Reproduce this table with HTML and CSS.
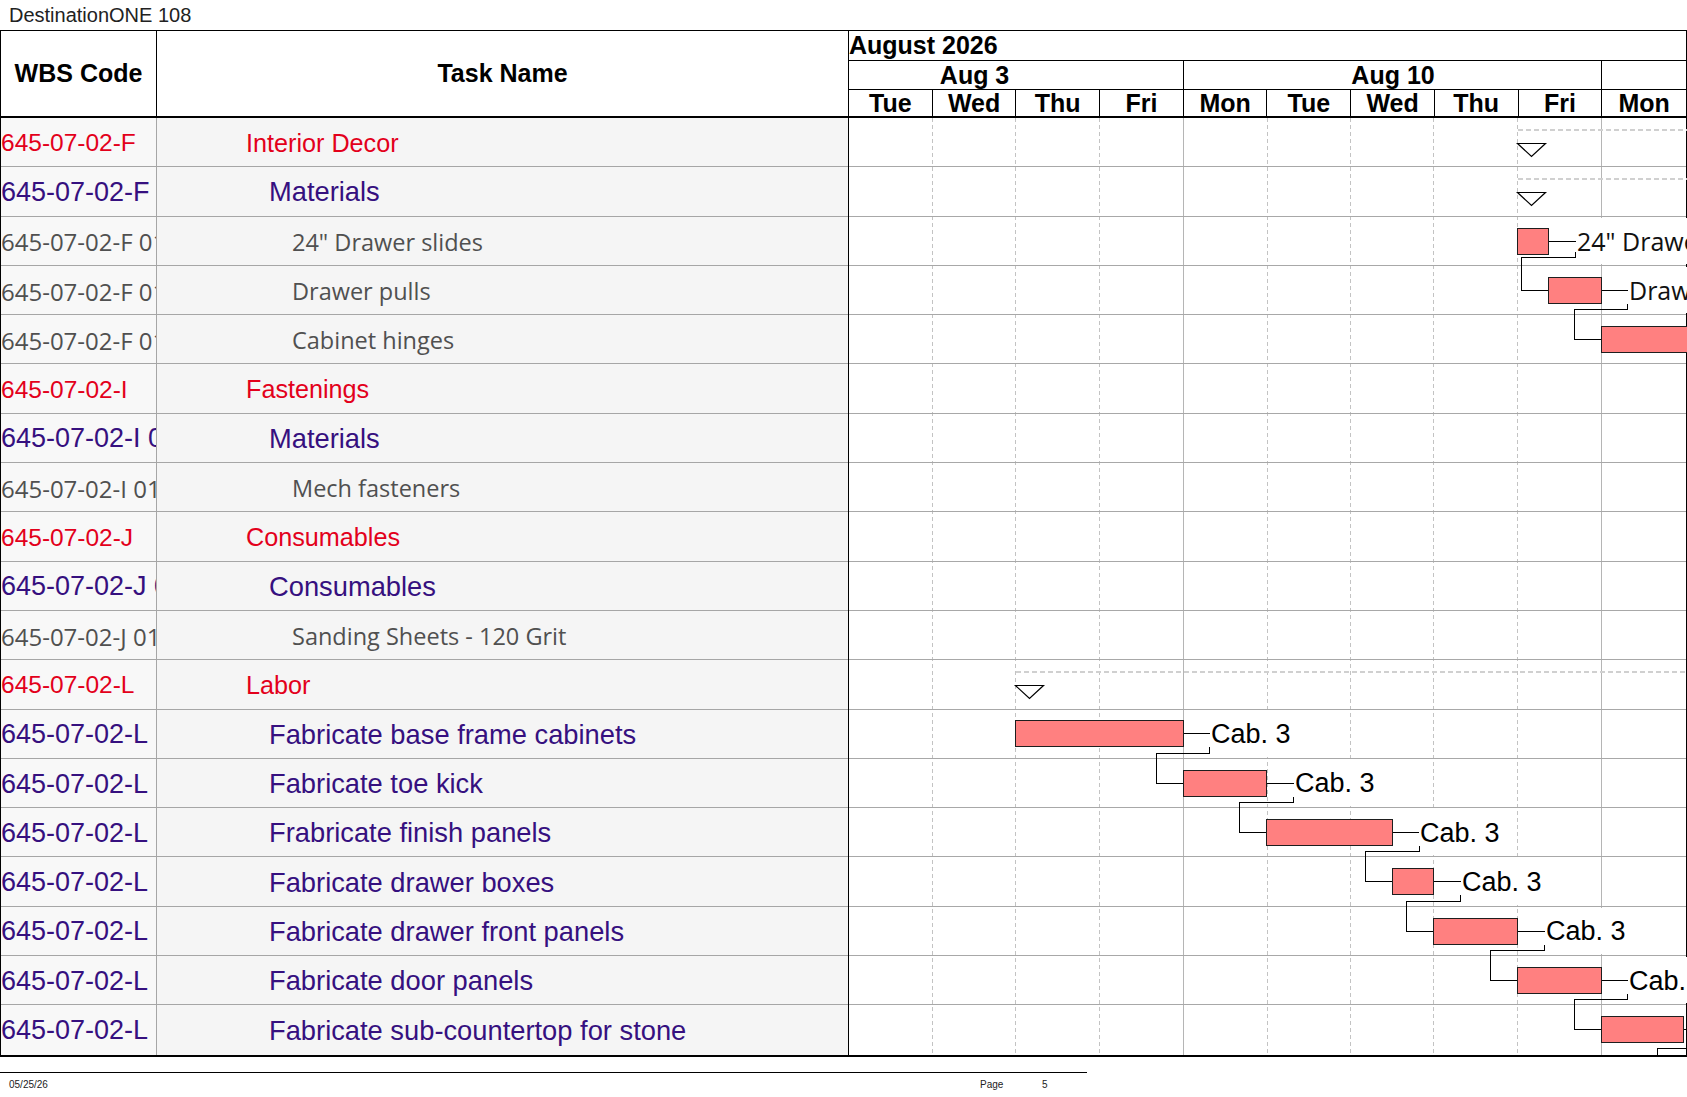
FILE: index.html
```
<!DOCTYPE html>
<html>
<head>
<meta charset="utf-8">
<title>DestinationONE 108</title>
<link rel="stylesheet" href="styles.css">
</head>
<body>
<div class="title">DestinationONE 108</div>
<div class="sheet">
  <div class="th th-wbs">WBS Code</div>
  <div class="th th-task">Task Name</div>
  <div class="timescale">
    <div class="ts-month">August 2026</div>
    <div class="ts-weeks">
      <div class="wk"><span class="wk-label wk-first">Aug 3</span></div>
      <div class="wk"><span class="wk-label">Aug 10</span></div>
      <div class="wk"></div>
    </div>
    <div class="ts-days">
      <div class="day">Tue</div><div class="day">Wed</div><div class="day">Thu</div><div class="day">Fri</div><div class="day">Mon</div>
      <div class="day">Tue</div><div class="day">Wed</div><div class="day">Thu</div><div class="day">Fri</div><div class="day">Mon</div>
    </div>
  </div>
  <div class="tbody">
    <div class="row l1"><div class="c-wbs">645-07-02-F</div><div class="c-task">Interior Decor</div></div>
    <div class="row l2"><div class="c-wbs">645-07-02-F 01</div><div class="c-task">Materials</div></div>
    <div class="row l3"><div class="c-wbs">645-07-02-F 01.01</div><div class="c-task">24" Drawer slides</div></div>
    <div class="row l3"><div class="c-wbs">645-07-02-F 01.02</div><div class="c-task">Drawer pulls</div></div>
    <div class="row l3"><div class="c-wbs">645-07-02-F 01.03</div><div class="c-task">Cabinet hinges</div></div>
    <div class="row l1"><div class="c-wbs">645-07-02-I</div><div class="c-task">Fastenings</div></div>
    <div class="row l2"><div class="c-wbs">645-07-02-I 01</div><div class="c-task">Materials</div></div>
    <div class="row l3"><div class="c-wbs">645-07-02-I 01.01</div><div class="c-task">Mech fasteners</div></div>
    <div class="row l1"><div class="c-wbs">645-07-02-J</div><div class="c-task">Consumables</div></div>
    <div class="row l2"><div class="c-wbs">645-07-02-J 01</div><div class="c-task">Consumables</div></div>
    <div class="row l3"><div class="c-wbs">645-07-02-J 01.01</div><div class="c-task">Sanding Sheets - 120 Grit</div></div>
    <div class="row l1"><div class="c-wbs">645-07-02-L</div><div class="c-task">Labor</div></div>
    <div class="row l2"><div class="c-wbs">645-07-02-L</div><div class="c-task">Fabricate base frame cabinets</div></div>
    <div class="row l2"><div class="c-wbs">645-07-02-L</div><div class="c-task">Fabricate toe kick</div></div>
    <div class="row l2"><div class="c-wbs">645-07-02-L</div><div class="c-task">Frabricate finish panels</div></div>
    <div class="row l2"><div class="c-wbs">645-07-02-L</div><div class="c-task">Fabricate drawer boxes</div></div>
    <div class="row l2"><div class="c-wbs">645-07-02-L</div><div class="c-task">Fabricate drawer front panels</div></div>
    <div class="row l2"><div class="c-wbs">645-07-02-L</div><div class="c-task">Fabricate door panels</div></div>
    <div class="row l2"><div class="c-wbs">645-07-02-L</div><div class="c-task">Fabricate sub-countertop for stone</div></div>
  </div>
  <div class="chart">
    <svg class="gantt" width="839" height="937" viewBox="0 0 839 937">
      <g class="vdash">
        <line x1="84.5" y1="0" x2="84.5" y2="937"/>
        <line x1="167.5" y1="0" x2="167.5" y2="937"/>
        <line x1="251.5" y1="0" x2="251.5" y2="937"/>
        <line x1="419.5" y1="0" x2="419.5" y2="937"/>
        <line x1="502.5" y1="0" x2="502.5" y2="937"/>
        <line x1="585.5" y1="0" x2="585.5" y2="937"/>
        <line x1="669.5" y1="0" x2="669.5" y2="937"/>
      </g>
      <g class="vsolid">
        <line x1="335.5" y1="0" x2="335.5" y2="937"/>
        <line x1="753.5" y1="0" x2="753.5" y2="937"/>
      </g>
      <g class="hrow">
        <line x1="0" y1="48.5" x2="839" y2="48.5"/>
        <line x1="0" y1="98.5" x2="839" y2="98.5"/>
        <line x1="0" y1="147.5" x2="839" y2="147.5"/>
        <line x1="0" y1="196.5" x2="839" y2="196.5"/>
        <line x1="0" y1="245.5" x2="839" y2="245.5"/>
        <line x1="0" y1="295.5" x2="839" y2="295.5"/>
        <line x1="0" y1="344.5" x2="839" y2="344.5"/>
        <line x1="0" y1="393.5" x2="839" y2="393.5"/>
        <line x1="0" y1="443.5" x2="839" y2="443.5"/>
        <line x1="0" y1="492.5" x2="839" y2="492.5"/>
        <line x1="0" y1="541.5" x2="839" y2="541.5"/>
        <line x1="0" y1="591.5" x2="839" y2="591.5"/>
        <line x1="0" y1="640.5" x2="839" y2="640.5"/>
        <line x1="0" y1="689.5" x2="839" y2="689.5"/>
        <line x1="0" y1="738.5" x2="839" y2="738.5"/>
        <line x1="0" y1="788.5" x2="839" y2="788.5"/>
        <line x1="0" y1="837.5" x2="839" y2="837.5"/>
        <line x1="0" y1="886.5" x2="839" y2="886.5"/>
      </g>
      <g class="edge">
        <line x1="0.5" y1="0" x2="0.5" y2="937"/>
        <line x1="838.5" y1="0" x2="838.5" y2="937"/>
      </g>
      <g class="summary">
        <line x1="669.5" y1="11.5" x2="839" y2="11.5"/>
        <line x1="669.5" y1="60.5" x2="839" y2="60.5"/>
        <line x1="167.5" y1="553.5" x2="839" y2="553.5"/>
      </g>
      <g class="tri">
        <polygon points="669.5,25.5 697.5,25.5 683.5,38.5"/>
        <polygon points="669.5,74.5 697.5,74.5 683.5,87.5"/>
        <polygon points="167.5,567.5 195.5,567.5 181.5,580.5"/>
      </g>
      <g class="link">
        <line x1="700.5" y1="123.5" x2="728" y2="123.5"/>
        <line x1="753.5" y1="172.5" x2="780" y2="172.5"/>
        <line x1="335.5" y1="615.5" x2="362" y2="615.5"/>
        <line x1="418.5" y1="665.5" x2="446" y2="665.5"/>
        <line x1="544.5" y1="714.5" x2="571" y2="714.5"/>
        <line x1="585.5" y1="763.5" x2="613" y2="763.5"/>
        <line x1="669.5" y1="813.5" x2="697" y2="813.5"/>
        <line x1="753.5" y1="862.5" x2="780" y2="862.5"/>
        <line x1="835.5" y1="911.5" x2="839" y2="911.5"/>
        <polyline points="727.5,134 727.5,139.5 673.5,139.5 673.5,172.5 700.5,172.5"/>
        <polyline points="779.5,186 779.5,191.5 726.5,191.5 726.5,221.5 753.5,221.5"/>
        <polyline points="361.5,629 361.5,635.5 308.5,635.5 308.5,665.5 335.5,665.5"/>
        <polyline points="445.5,679 445.5,684.5 391.5,684.5 391.5,714.5 418.5,714.5"/>
        <polyline points="571.5,728 571.5,733.5 517.5,733.5 517.5,763.5 544.5,763.5"/>
        <polyline points="612.5,777 612.5,783.5 558.5,783.5 558.5,813.5 585.5,813.5"/>
        <polyline points="696.5,827 696.5,832.5 642.5,832.5 642.5,862.5 669.5,862.5"/>
        <polyline points="779.5,876 779.5,881.5 726.5,881.5 726.5,911.5 753.5,911.5"/>
        <polyline points="839,930.5 809.5,930.5 809.5,940"/>
      </g>
      <g class="bar">
        <rect x="669.5" y="110.5" width="31" height="26"/>
        <rect x="700.5" y="159.5" width="53" height="26"/>
        <rect x="753.5" y="208.5" width="100" height="26"/>
        <rect x="167.5" y="602.5" width="168" height="26"/>
        <rect x="335.5" y="652.5" width="83" height="26"/>
        <rect x="418.5" y="701.5" width="126" height="26"/>
        <rect x="544.5" y="750.5" width="41" height="26"/>
        <rect x="585.5" y="800.5" width="84" height="26"/>
        <rect x="669.5" y="849.5" width="84" height="26"/>
        <rect x="753.5" y="898.5" width="82" height="26"/>
      </g>
      <g class="lbl-bg">
        <rect x="729" y="100" width="120" height="46"/>
        <rect x="781" y="149" width="70" height="46"/>
        <rect x="363" y="593" width="81" height="46"/>
        <rect x="447" y="642" width="81" height="46"/>
        <rect x="572" y="691" width="81" height="46"/>
        <rect x="614" y="741" width="81" height="46"/>
        <rect x="698" y="790" width="81" height="46"/>
        <rect x="781" y="839" width="70" height="46"/>
      </g>
      <text class="lbl-o" x="729" y="133">24" Drawer slides</text>
      <text class="lbl-o" x="781" y="182">Drawer pulls</text>
      <text class="lbl" x="363" y="625">Cab. 3</text>
      <text class="lbl" x="447" y="674">Cab. 3</text>
      <text class="lbl" x="572" y="724">Cab. 3</text>
      <text class="lbl" x="614" y="773">Cab. 3</text>
      <text class="lbl" x="698" y="822">Cab. 3</text>
      <text class="lbl" x="781" y="872">Cab. 3</text>
    </svg>
  </div>
</div>
<div class="footer">
  <span class="f-date">05/25/26</span>
  <span class="f-page">Page</span>
  <span class="f-num">5</span>
</div>
</body>
</html>
```
FILE: styles.css
```
html, body {
  margin: 0;
  padding: 0;
  background: #fff;
}
body {
  width: 1687px;
  height: 1097px;
  overflow: hidden;
  font-family: "Liberation Sans", Arial, sans-serif;
  color: #000;
}
.title {
  height: 30px;
  line-height: 30px;
  padding-left: 9px;
  font-size: 20px;
  color: #222;
}
.sheet {
  display: grid;
  grid-template-columns: 156px 691px 839px;
  grid-template-rows: 87px 937px;
  border-top: 1px solid #000;
  border-left: 1px solid #000;
  border-bottom: 2px solid #000;
}
.th {
  display: flex;
  align-items: center;
  justify-content: center;
  font-weight: bold;
  font-size: 25px;
  border-bottom: 2px solid #000;
}
.th-wbs {
  border-right: 1px solid #000;
}
.timescale {
  display: flex;
  flex-direction: column;
  border-left: 1px solid #000;
  border-right: 1px solid #000;
  font-weight: bold;
  font-size: 25px;
  overflow: hidden;
}
.ts-month {
  height: 29px;
  line-height: 29px;
  border-bottom: 1px solid #000;
  white-space: nowrap;
}
.ts-weeks {
  display: grid;
  grid-template-columns: 4fr 5fr 1fr;
  height: 28px;
  border-bottom: 1px solid #000;
}
.wk {
  overflow: hidden;
  border-right: 1px solid #000;
  white-space: nowrap;
}
.wk:last-child {
  border-right: none;
}
.wk-label {
  display: block;
  width: 418.5px;
  text-align: center;
  line-height: 28px;
}
.wk-first {
  margin-left: -83.7px;
}
.ts-days {
  display: grid;
  grid-template-columns: repeat(10, 1fr);
  height: 26px;
  border-bottom: 2px solid #000;
}
.day {
  text-align: center;
  line-height: 26px;
  border-right: 1px solid #000;
}
.day:last-child {
  border-right: none;
}
.tbody {
  grid-column: 1 / 3;
  display: flex;
  flex-direction: column;
}
.row {
  flex: none;
  display: grid;
  grid-template-columns: 156px 691px;
  height: 49.3px;
  box-sizing: border-box;
  border-bottom: 1px solid #a6a6a6;
}
.row:last-child {
  border-bottom: none;
}
.c-wbs {
  display: flex;
  align-items: center;
  padding-top: 2px;
  white-space: nowrap;
  overflow: hidden;
  border-right: 1px solid #a6a6a6;
  background: #f8f8f8;
}
.c-task {
  display: flex;
  align-items: center;
  padding-top: 2px;
  white-space: nowrap;
  overflow: hidden;
  background: #f5f5f5;
}
.l1 {
  color: #e3001b;
  font-size: 24.5px;
}
.l1 .c-task {
  font-size: 25.2px;
  padding-left: 89px;
}
.l2 {
  color: #36107f;
  font-size: 27px;
}
.l2 .c-task {
  font-size: 27.3px;
  padding-left: 112px;
}
.l3 {
  color: #505050;
  font-size: 24px;
  font-family: "Open Sans", "Liberation Sans", sans-serif;
}
.l3 .c-task {
  font-size: 23.5px;
  padding-left: 135px;
}
.chart {
  overflow: hidden;
  background: #fff;
}
.gantt {
  display: block;
  shape-rendering: crispEdges;
}
.vdash line {
  stroke: #c3c3c3;
  stroke-width: 1;
  stroke-dasharray: 4 3;
}
.vsolid line {
  stroke: #b5b5b5;
  stroke-width: 1;
}
.hrow line {
  stroke: #a8a8a8;
  stroke-width: 1;
}
.edge line {
  stroke: #000;
  stroke-width: 1;
}
.summary line {
  stroke: #d0d0d0;
  stroke-width: 2;
  stroke-dasharray: 5 3;
}
.tri polygon {
  fill: #fff;
  stroke: #000;
  stroke-width: 1.2;
  shape-rendering: geometricPrecision;
}
.link line,
.link polyline {
  fill: none;
  stroke: #000;
  stroke-width: 1;
}
.bar rect {
  fill: #ff8080;
  stroke: #1e1e1e;
  stroke-width: 1;
}
.lbl-bg rect {
  fill: #fff;
}
.lbl {
  font-family: "Liberation Sans", Arial, sans-serif;
  font-size: 27px;
  fill: #000;
}
.lbl-o {
  font-family: "Open Sans", "Liberation Sans", sans-serif;
  font-size: 25px;
  fill: #111;
}
.footer {
  width: 1087px;
  margin-top: 15px;
  border-top: 1px solid #000;
  display: flex;
  padding-top: 6px;
  font-size: 10px;
  color: #222;
}
.f-date {
  flex: none;
  width: 971px;
  padding-left: 9px;
}
.f-page {
  flex: none;
  width: 62px;
}
.f-num {
  flex: none;
}
```
